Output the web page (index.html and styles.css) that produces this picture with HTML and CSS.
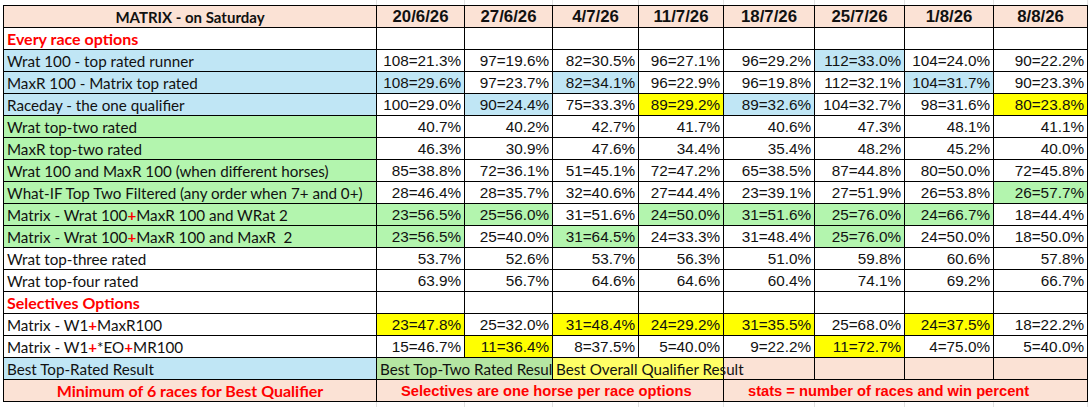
FILE: index.html
```html
<!DOCTYPE html>
<html lang="en">
<head>
<meta charset="utf-8">
<title>MATRIX - on Saturday</title>
<link rel="stylesheet" href="styles.css">
</head>
<body>
<div class="gridlines top">
  <span></span><span></span><span></span><span></span><span></span><span></span><span></span><span></span><span></span>
</div>
<table class="sheet">
  <tbody>
    <tr class="head">
      <td class="label title">MATRIX - on Saturday</td>
      <td>20/6/26</td><td>27/6/26</td><td>4/7/26</td><td>11/7/26</td><td>18/7/26</td><td>25/7/26</td><td>1/8/26</td><td>8/8/26</td>
    </tr>
    <tr>
      <td class="label section">Every race options</td>
      <td></td><td></td><td></td><td></td><td></td><td></td><td></td><td></td>
    </tr>
    <tr>
      <td class="label blue">Wrat 100 - top rated runner</td>
      <td>108=21.3%</td><td>97=19.6%</td><td>82=30.5%</td><td>96=27.1%</td><td>96=29.2%</td><td class="blue">112=33.0%</td><td>104=24.0%</td><td>90=22.2%</td>
    </tr>
    <tr>
      <td class="label blue">MaxR 100 - Matrix top rated</td>
      <td class="blue">108=29.6%</td><td>97=23.7%</td><td class="blue">82=34.1%</td><td>96=22.9%</td><td>96=19.8%</td><td>112=32.1%</td><td class="blue">104=31.7%</td><td>90=23.3%</td>
    </tr>
    <tr>
      <td class="label blue">Raceday - the one qualifier</td>
      <td>100=29.0%</td><td class="blue">90=24.4%</td><td>75=33.3%</td><td class="yellow">89=29.2%</td><td class="blue">89=32.6%</td><td>104=32.7%</td><td>98=31.6%</td><td class="yellow">80=23.8%</td>
    </tr>
    <tr>
      <td class="label green">Wrat top-two rated</td>
      <td>40.7%</td><td>40.2%</td><td>42.7%</td><td>41.7%</td><td>40.6%</td><td>47.3%</td><td>48.1%</td><td>41.1%</td>
    </tr>
    <tr>
      <td class="label green">MaxR top-two rated</td>
      <td>46.3%</td><td>30.9%</td><td>47.6%</td><td>34.4%</td><td>35.4%</td><td>48.2%</td><td>45.2%</td><td>40.0%</td>
    </tr>
    <tr>
      <td class="label green">Wrat 100 and MaxR 100 (when different horses)</td>
      <td>85=38.8%</td><td>72=36.1%</td><td>51=45.1%</td><td>72=47.2%</td><td>65=38.5%</td><td>87=44.8%</td><td>80=50.0%</td><td>72=45.8%</td>
    </tr>
    <tr>
      <td class="label green">What-IF Top Two Filtered (any order when 7+ and 0+)</td>
      <td>28=46.4%</td><td>28=35.7%</td><td>32=40.6%</td><td>27=44.4%</td><td>23=39.1%</td><td>27=51.9%</td><td>26=53.8%</td><td class="green">26=57.7%</td>
    </tr>
    <tr>
      <td class="label green">Matrix - Wrat 100<span class="plus">+</span>MaxR 100 and WRat 2</td>
      <td class="green">23=56.5%</td><td class="green">25=56.0%</td><td>31=51.6%</td><td class="green">24=50.0%</td><td class="green">31=51.6%</td><td class="green">25=76.0%</td><td class="green">24=66.7%</td><td>18=44.4%</td>
    </tr>
    <tr>
      <td class="label green">Matrix - Wrat 100<span class="plus">+</span>MaxR 100 and MaxR&nbsp; 2</td>
      <td class="green">23=56.5%</td><td>25=40.0%</td><td class="green">31=64.5%</td><td>24=33.3%</td><td>31=48.4%</td><td class="green">25=76.0%</td><td>24=50.0%</td><td>18=50.0%</td>
    </tr>
    <tr>
      <td class="label">Wrat top-three rated</td>
      <td>53.7%</td><td>52.6%</td><td>53.7%</td><td>56.3%</td><td>51.0%</td><td>59.8%</td><td>60.6%</td><td>57.8%</td>
    </tr>
    <tr>
      <td class="label">Wrat top-four rated</td>
      <td>63.9%</td><td>56.7%</td><td>64.6%</td><td>64.6%</td><td>60.4%</td><td>74.1%</td><td>69.2%</td><td>66.7%</td>
    </tr>
    <tr>
      <td class="label section">Selectives Options</td>
      <td></td><td></td><td></td><td></td><td></td><td></td><td></td><td></td>
    </tr>
    <tr>
      <td class="label">Matrix - W1<span class="plus">+</span>MaxR100</td>
      <td class="yellow">23=47.8%</td><td>25=32.0%</td><td class="yellow">31=48.4%</td><td class="yellow">24=29.2%</td><td class="yellow">31=35.5%</td><td>25=68.0%</td><td class="yellow">24=37.5%</td><td>18=22.2%</td>
    </tr>
    <tr>
      <td class="label">Matrix - W1<span class="plus">+</span>*EO<span class="plus">+</span>MR100</td>
      <td>15=46.7%</td><td class="yellow">11=36.4%</td><td>8=37.5%</td><td>5=40.0%</td><td>9=22.2%</td><td class="yellow">11=72.7%</td><td>4=75.0%</td><td>5=40.0%</td>
    </tr>
    <tr>
      <td class="label blue">Best Top-Rated Result</td>
      <td class="key key-two" colspan="2">Best Top-Two Rated Result</td>
      <td class="key key-overall" colspan="2">Best Overall Qualifier Result</td>
      <td class="peach"></td><td class="peach"></td><td class="peach"></td><td class="peach"></td>
    </tr>
    <tr class="foot">
      <td class="label note-main">Minimum of 6 races for Best Qualifier</td>
      <td class="note" colspan="4">Selectives are one horse per race options</td>
      <td class="note" colspan="4">stats = number of races and win percent</td>
    </tr>
  </tbody>
</table>
<div class="gridlines bottom">
  <span></span><span></span><span></span><span></span><span></span><span></span><span></span><span></span><span></span>
</div>
</body>
</html>
```

FILE: styles.css
```css
* {
  box-sizing: border-box;
}

body {
  margin: 0;
  background: #ffffff;
  color: #111111;
}

/* faint spreadsheet gridlines above and below the table */
.gridlines {
  display: flex;
  margin-left: 3px;
  width: 1085px;
}

.gridlines.top {
  height: 5px;
}

.gridlines.bottom {
  height: 6px;
}

.gridlines span {
  border-right: 1px solid #e1e1e1;
}

.gridlines span:nth-child(1) { width: 374px; }
.gridlines span:nth-child(2) { width: 88px; }
.gridlines span:nth-child(3) { width: 88px; }
.gridlines span:nth-child(4) { width: 86px; }
.gridlines span:nth-child(5) { width: 85px; }
.gridlines span:nth-child(6) { width: 91px; }
.gridlines span:nth-child(7) { width: 90px; }
.gridlines span:nth-child(8) { width: 89px; }
.gridlines span:nth-child(9) { width: 94px; }

.sheet {
  margin: 0 0 0 3px;
  width: 1085px;
  table-layout: fixed;
  border-collapse: separate;
  border-spacing: 0;
}

.sheet td {
  height: 22px;
  padding: 1px 3px 0 3px;
  border-right: 1px solid #000000;
  border-bottom: 1px solid #000000;
  font-family: "Liberation Sans", Arial, sans-serif;
  font-size: 15.3px;
  line-height: 20px;
  text-align: right;
  vertical-align: middle;
  white-space: nowrap;
  background: #ffffff;
}

.sheet td.label {
  border-left: 1px solid #000000;
  text-align: left;
  font-family: Lato, "Open Sans", sans-serif;
  font-size: 15.2px;
}

.head td {
  height: 23px;
  border-top: 1px solid #000000;
  background: #fbe2d5;
  font-weight: bold;
  font-size: 16.8px;
  text-align: center;
}

.head td:nth-child(1) { width: 374px; }
.head td:nth-child(2) { width: 88px; }
.head td:nth-child(3) { width: 88px; }
.head td:nth-child(4) { width: 86px; }
.head td:nth-child(5) { width: 85px; }
.head td:nth-child(6) { width: 91px; }
.head td:nth-child(7) { width: 90px; }
.head td:nth-child(8) { width: 89px; }
.head td:nth-child(9) { width: 94px; }

.sheet td.title {
  text-align: center;
  font-weight: bold;
  font-size: 15px;
}

.sheet td.section {
  color: #ff0000;
  font-weight: bold;
  font-size: 16px;
}

.plus {
  color: #ff0000;
  font-weight: bold;
}

.sheet td.blue {
  background: #c0e6f5;
}

.sheet td.green {
  background: #b3f5ae;
}

.sheet td.yellow {
  background: #ffff00;
}

.sheet td.peach {
  background: #fbe2d5;
}

.sheet td.key {
  text-align: left;
  font-family: Lato, "Open Sans", sans-serif;
  font-size: 15.2px;
}

.sheet td.key-two {
  background: #b5e6a2;
  overflow: hidden;
}

.sheet td.key-overall {
  background: #ffff66;
  overflow: visible;
}

.foot td {
  background: #fbe2d5;
  color: #ff0000;
  font-weight: bold;
}

.sheet td.note-main {
  text-align: center;
  font-size: 16px;
}

.sheet td.note {
  text-align: left;
  padding-left: 24px;
  font-size: 14.7px;
}
```
